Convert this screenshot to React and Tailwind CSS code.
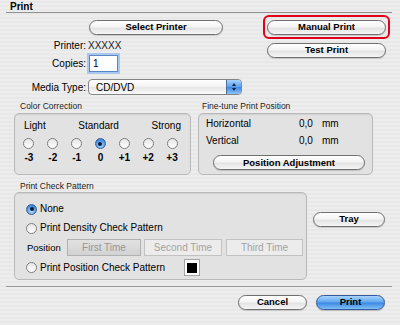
import React from "react";

const btn =
  "flex items-center justify-center rounded-full border border-[#6f6f6f] bg-[linear-gradient(#ffffff,#f4f4f4_45%,#e3e3e3_55%,#f6f6f6)] text-[9.5px] font-bold text-black shadow-[0_1px_1px_rgba(0,0,0,0.15)]";

function Radio({ on }) {
  if (on) {
    return (
      <span className="flex h-[11px] w-[11px] shrink-0 items-center justify-center rounded-full border border-[#3c5f95] bg-[radial-gradient(circle_at_50%_70%,#bfe0ff,#4a95e8_60%,#2f6fcf)]">
        <span className="h-[4px] w-[4px] rounded-full bg-[#0b1a33]" />
      </span>
    );
  }
  return (
    <span className="h-[11px] w-[11px] shrink-0 rounded-full border border-[#7d7d7d] bg-[linear-gradient(#e6e6e6,#ffffff)]" />
  );
}

function GroupLabel({ children, className = "" }) {
  return <div className={`h-[9px] text-[8.5px] leading-[9px] text-[#222] ${className}`}>{children}</div>;
}

export default function App() {
  const levels = ["-3", "-2", "-1", "0", "+1", "+2", "+3"];

  return (
    <div className="h-[325px] w-[400px] overflow-hidden bg-[repeating-linear-gradient(0deg,#ededed_0px,#ededed_2px,#e8e8e8_2px,#e8e8e8_4px)] font-['Liberation_Sans',Arial,sans-serif] text-black">
      {/* title */}
      <div className="h-[12px] pl-[10px] pt-[2px] text-[10px] font-bold leading-[10px]">Print</div>
      <div className="ml-[6px] h-px w-[386px] bg-[#8f8f8f]" />

      {/* top section */}
      <div className="flex">
        <div className="w-[263px]">
          <div className={`${btn} ml-[89px] mt-[7px] h-[15px] w-[134px]`}>Select Printer</div>
          <div className="mt-[4px] flex h-[13px] items-center text-[10px]">
            <span className="w-[86px] text-right">Printer:</span>
            <span className="ml-[2px] text-[#222]">XXXXX</span>
          </div>
          <div className="mt-[3px] flex h-[17px] items-center text-[10px]">
            <span className="w-[86px] text-right">Copies:</span>
            <span className="ml-[3px] flex h-[17px] w-[29px] items-center border border-[#5d86c4] bg-white pl-[3px] shadow-[0_0_0_2px_#a8c8ef]">
              1
            </span>
          </div>
          <div className="mt-[7px] flex h-[16px] items-center text-[10px]">
            <span className="w-[86px] text-right">Media Type:</span>
            <span className="ml-[2px] flex h-[16px] w-[154px] overflow-hidden rounded-[4px] border border-[#868686] bg-[linear-gradient(#ffffff,#f2f2f2_50%,#e6e6e6_51%,#fafafa)]">
              <span className="flex flex-1 items-center pl-[7px]">CD/DVD</span>
              <span className="flex w-[15px] flex-col items-center justify-center gap-[2px] border-l border-[#4d6fa5] bg-[linear-gradient(#a9d2fa,#5aa0ec_50%,#3d86e2_51%,#8cc4f7)]">
                <span className="h-0 w-0 border-x-[2.5px] border-b-[3px] border-x-transparent border-b-[#10243f]" />
                <span className="h-0 w-0 border-x-[2.5px] border-t-[3px] border-x-transparent border-t-[#10243f]" />
              </span>
            </span>
          </div>
        </div>
        <div className="pt-[2px]">
          <div className="flex h-[24px] w-[127px] items-center justify-center rounded-[6px] border-2 border-[#e3001b]">
            <div className={`${btn} h-[15px] w-[119px]`}>Manual Print</div>
          </div>
          <div className={`${btn} ml-[4px] mt-[4px] h-[15px] w-[119px]`}>Test Print</div>
        </div>
      </div>

      {/* middle groups */}
      <div className="mt-[7px] flex">
        <div className="ml-[14px] w-[177px]">
          <GroupLabel className="pl-[6px]">Color Correction</GroupLabel>
          <div className="mt-[2px] h-[62px] rounded-[5px] border border-[#b9b9b9] bg-[#e2e2e2] shadow-[inset_0_1px_1px_rgba(0,0,0,0.08)]">
            <div className="flex justify-between pl-[9px] pr-[9px] pt-[6px] text-[10px] leading-[12px]">
              <span>Light</span>
              <span>Standard</span>
              <span>Strong</span>
            </div>
            <div className="ml-[2px] mt-[6px] grid w-[167px] grid-cols-7">
              {levels.map((l) => (
                <div key={l} className="flex justify-center">
                  <Radio on={l === "0"} />
                </div>
              ))}
            </div>
            <div className="ml-[2px] mt-[3px] grid w-[167px] grid-cols-7 text-[10px] font-bold leading-[12px]">
              {levels.map((l) => (
                <div key={l} className="text-center">
                  {l}
                </div>
              ))}
            </div>
          </div>
        </div>
        <div className="ml-[7px] w-[175px]">
          <GroupLabel className="pl-[4px]">Fine-tune Print Position</GroupLabel>
          <div className="mt-[2px] h-[62px] rounded-[5px] border border-[#b9b9b9] bg-[#e2e2e2] pl-[7px] pt-[4px] text-[10px] leading-[12px] shadow-[inset_0_1px_1px_rgba(0,0,0,0.08)]">
            <div className="flex">
              <span className="w-[93px]">Horizontal</span>
              <span>0,0</span>
              <span className="ml-[9px]">mm</span>
            </div>
            <div className="mt-[5px] flex">
              <span className="w-[93px]">Vertical</span>
              <span>0,0</span>
              <span className="ml-[9px]">mm</span>
            </div>
            <div className={`${btn} ml-[7px] mt-[8px] h-[15px] w-[152px]`}>Position Adjustment</div>
          </div>
        </div>
      </div>

      {/* print check pattern */}
      <div className="mt-[7px] flex">
        <div className="ml-[14px] w-[293px]">
          <GroupLabel className="pl-[6px]">Print Check Pattern</GroupLabel>
          <div className="mt-[1px] h-[88px] rounded-[5px] border border-[#b9b9b9] bg-[#e2e2e2] pl-[11px] pt-[10px] text-[10px] leading-[12px] shadow-[inset_0_1px_1px_rgba(0,0,0,0.08)]">
            <div className="flex h-[12px] items-center gap-[3px]">
              <Radio on />
              <span>None</span>
            </div>
            <div className="mt-[7px] flex h-[12px] items-center gap-[3px]">
              <Radio />
              <span>Print Density Check Pattern</span>
            </div>
            <div className="mt-[5px] flex h-[17px] items-center">
              <span className="ml-[1px] w-[40px] text-[9.5px]">Position</span>
              <span className="flex h-[17px] w-[74px] items-center justify-center border border-[#b1b1b1] bg-[linear-gradient(#e2e2e2,#d2d2d2)] text-[#979797]">
                First Time
              </span>
              <span className="ml-[3px] flex h-[17px] w-[78px] items-center justify-center border border-[#c2c2c2] bg-[#ececec] text-[#a3a3a3]">
                Second Time
              </span>
              <span className="ml-[4px] flex h-[17px] w-[77px] items-center justify-center border border-[#c2c2c2] bg-[#ececec] text-[#a3a3a3]">
                Third Time
              </span>
            </div>
            <div className="mt-[3px] flex h-[17px] items-center gap-[3px]">
              <Radio />
              <span className="w-[141px]">Print Position Check Pattern</span>
              <span className="flex h-[17px] w-[16px] items-center justify-center border border-[#a5a5a5] bg-white">
                <span className="h-[10px] w-[10px] bg-black" />
              </span>
            </div>
          </div>
        </div>
        <div className={`${btn} ml-[6px] mt-[30px] h-[15px] w-[72px]`}>Tray</div>
      </div>

      {/* footer */}
      <div className="ml-[6px] mt-[6px] h-px w-[386px] bg-[#9b9b9b]" />
      <div className="mt-[8px] flex">
        <div className={`${btn} ml-[238px] h-[15px] w-[69px]`}>Cancel</div>
        <div className="ml-[9px] flex h-[15px] w-[69px] items-center justify-center rounded-full border border-[#34589a] bg-[linear-gradient(#a8d4fb,#5ea6ee_48%,#3a87e3_52%,#7fc0f7)] text-[9.5px] font-bold text-black shadow-[0_1px_1px_rgba(0,0,0,0.2)]">
          Print
        </div>
      </div>
    </div>
  );
}
